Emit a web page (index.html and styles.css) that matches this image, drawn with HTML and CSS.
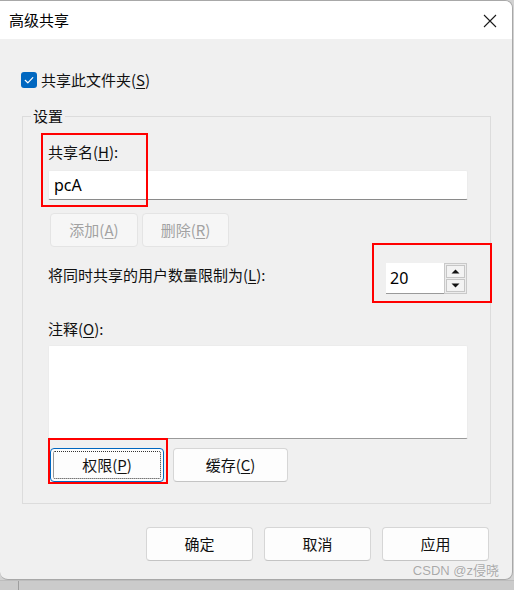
FILE: index.html
```html
<!DOCTYPE html>
<html lang="zh-CN">
<head>
<meta charset="utf-8">
<title>高级共享</title>
<link rel="stylesheet" href="styles.css">
</head>
<body>
<div class="screen">
  <div class="window">
    <div class="titlebar">
      <span class="title">高级共享</span>
      <svg class="close" width="14" height="14" viewBox="0 0 14 14"><path d="M1 1L13 13M13 1L1 13" stroke="#1a1a1a" stroke-width="1.1" fill="none"/></svg>
    </div>
    <div class="body">
      <div class="check-row">
        <span class="checkbox"><svg width="16" height="16" viewBox="0 0 16 16"><path d="M4.2 8.3L6.8 10.8L11.8 5.6" stroke="#fff" stroke-width="1.2" fill="none" stroke-linecap="round" stroke-linejoin="round"/></svg></span>
        <span>共享此文件夹(<u>S</u>)</span>
      </div>
      <fieldset class="group">
        <legend>设置</legend>
        <div class="label">共享名(<u>H</u>):</div>
        <div class="textbox">pcA</div>
        <div class="btn-row">
          <button class="btn disabled w88">添加(<u>A</u>)</button>
          <button class="btn disabled w87">删除(<u>R</u>)</button>
        </div>
        <div class="limit-row">
          <span class="limit-label">将同时共享的用户数量限制为(<u>L</u>):</span>
          <div class="spinner">
            <div class="spin-input">20</div>
            <div class="spin-btns">
              <span class="spin-btn"><svg width="9" height="5" viewBox="0 0 9 5"><path d="M0.5 4.5L4.5 0.5L8.5 4.5Z" fill="#111"/></svg></span>
              <span class="spin-btn"><svg width="9" height="5" viewBox="0 0 9 5"><path d="M0.5 0.5L4.5 4.5L8.5 0.5Z" fill="#111"/></svg></span>
            </div>
          </div>
        </div>
        <div class="label comment-label">注释(<u>O</u>):</div>
        <div class="textarea"></div>
        <div class="btn-row btn-row2">
          <button class="btn focused w114"><span class="focus-ring">权限(<u>P</u>)</span></button>
          <button class="btn w115">缓存(<u>C</u>)</button>
        </div>
      </fieldset>
      <div class="footer">
        <button class="btn fbtn">确定</button>
        <button class="btn fbtn">取消</button>
        <button class="btn fbtn">应用</button>
      </div>
    </div>
    <div class="mark mark1"></div>
    <div class="mark mark2"></div>
    <div class="mark mark3"></div>
    <div class="watermark">CSDN @z侵晓</div>
  </div>
  <div class="desk"><span class="desk-line"></span></div>
</div>
</body>
</html>
```

FILE: styles.css
```css
* { box-sizing: border-box; }
html, body { margin: 0; padding: 0; }
body {
  background: #cfcfcf;
  font-family: "Noto Sans CJK SC", "Noto Sans", sans-serif;
  font-size: 15px;
  color: #111;
  width: 514px;
  height: 590px;
  overflow: hidden;
}
u { text-decoration: underline; text-underline-offset: 2px; text-decoration-thickness: 1px; }
.screen { width: 514px; height: 590px; background: #d2d2d2; }
.window {
  position: relative;
  width: 513px;
  height: 580px;
  border: 1px solid #a8a8a8;
  border-left: none;
  border-radius: 0 8px 8px 8px;
  overflow: hidden;
  background: #f0f0f0;
}
.titlebar {
  height: 38px;
  background: #fff;
  display: flex;
  align-items: center;
  justify-content: space-between;
  padding: 0 15px 0 9px;
}
.title { font-size: 15px; line-height: 20px; color: #000; }
.close { display: block; margin-top: 1px; }
.body { padding: 31px 0 0 21px; }
.check-row { display: flex; align-items: center; height: 20px; line-height: 20px; gap: 4px; }
.checkbox {
  width: 16px; height: 16px; border-radius: 3px; background: #0067c0; display: block;
}
.checkbox svg { display: block; }
.group {
  margin: 16px 0 0 1px;
  width: 469px;
  border: 1px solid #dcdcdc;
  padding: 16px 22px 21px 25px;
  min-width: 0;
}
.group legend { padding: 0 2px; margin-left: -17px; line-height: 20px; font-size: 15px; }
.label { line-height: 20px; height: 20px; }
.textbox {
  margin-top: 8px;
  height: 30px;
  background: #fff;
  border: 1px solid #ececec;
  border-bottom: 1px solid #8a8a8a;
  border-radius: 2px;
  padding-left: 5px;
  font-family: "Noto Sans", sans-serif;
  font-size: 16px;
  line-height: 28px;
  color: #000;
}
.btn-row { display: flex; gap: 4px; margin-top: 13px; padding-left: 2px; }
.btn {
  font-family: "Noto Sans CJK SC", "Noto Sans", sans-serif;
  font-size: 15px;
  height: 34px;
  padding: 0;
  background: #fdfdfd;
  border: 1px solid #d6d6d6;
  border-bottom-color: #c4c4c4;
  border-radius: 4px;
  color: #111;
  line-height: 20px;
}
.btn.disabled { background: #f6f6f6; border-color: #e4e4e4; color: #a2a2a2; }
.w88 { width: 88px; }
.w87 { width: 87px; }
.w114 { width: 114px; }
.w115 { width: 115px; }
.limit-row { display: flex; justify-content: space-between; align-items: flex-start; margin-top: 16px; }
.limit-label { line-height: 20px; margin-top: 2px; }
.spinner { display: flex; height: 31px; margin-right: 1px; }
.spin-input {
  width: 58px; height: 31px; background: #fff; border-bottom: 1px solid #9a9a9a;
  font-family: "Noto Sans", sans-serif; font-size: 16px; line-height: 30px; padding-left: 4px; color: #000;
}
.spin-btns {
  width: 23px; height: 31px; border: 1px solid #c9c9c9; background: #ececec;
  display: flex; flex-direction: column; padding: 1px; gap: 1px;
}
.spin-btn {
  flex: 1; display: flex; align-items: center; justify-content: center;
  background: #f3f3f3; border: 1px solid #c6c6c6;
}
.spin-btn svg { display: block; }
.comment-label { margin-top: 25px; }
.textarea {
  margin-top: 6px; height: 94px; background: #fff;
  border: 1px solid #ececec; border-bottom: 1px solid #9a9a9a; border-radius: 2px;
}
.btn-row2 { gap: 9px; margin-top: 9px; }
.btn.focused { border: 1px solid #0067c0; padding: 2px; background: #fdfdfd; }
.focus-ring {
  display: flex; align-items: center; justify-content: center;
  width: 100%; height: 100%; border: 1px dotted #333; border-radius: 2px;
}
.footer { display: flex; justify-content: flex-end; gap: 11px; margin-top: 23px; padding-right: 23px; }
.fbtn { width: 107px; }
.mark { position: absolute; border: 2px solid #ff0000; }
.mark1 { left: 41px; top: 132px; width: 107px; height: 74px; }
.mark2 { left: 372px; top: 242px; width: 120px; height: 60px; }
.mark3 { left: 48px; top: 437px; width: 120px; height: 46px; }
.watermark {
  position: absolute; right: 13px; bottom: 1px;
  font-family: "Liberation Sans", "Noto Sans CJK SC", sans-serif;
  font-size: 13px; line-height: 14px; color: #a9a9a9; text-shadow: 0 0 1px #fff;
}
.desk { height: 10px; border-top: 1px solid #bdbdbd; position: relative; background: #cbcbcb; }
.desk-line { display: block; width: 1px; height: 9px; margin-left: 18px; background: #9e9e9e; }
```
